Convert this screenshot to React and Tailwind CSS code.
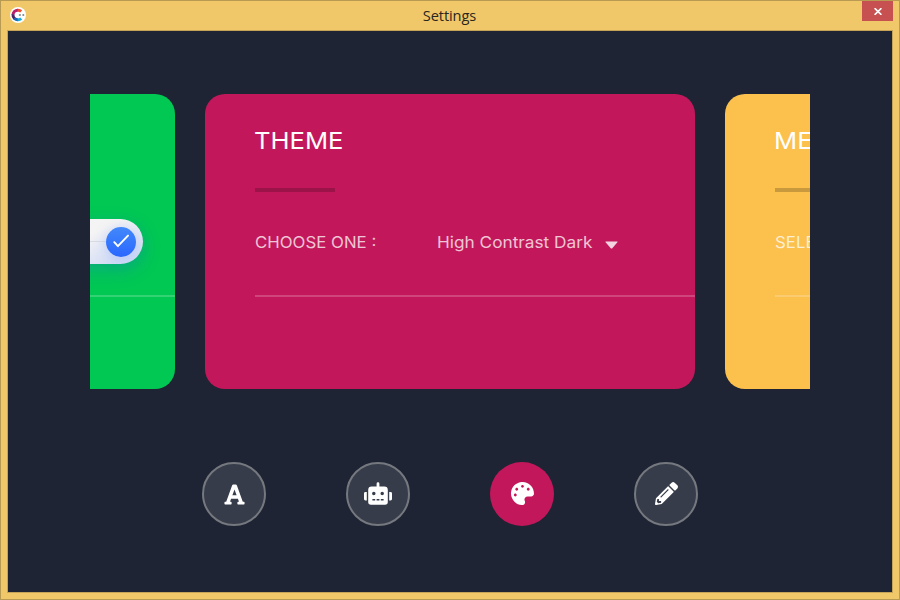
import { FaFont, FaRobot, FaPalette, FaPencilAlt } from "react-icons/fa";

function AppLogo() {
  return (
    <svg className="h-4 w-4" viewBox="0 0 16 16" fill="none">
      <circle cx="8" cy="8" r="8" fill="#fff" />
      <path d="M11.2 4.4A4.7 4.7 0 0 0 7.6 3.2" stroke="#ee4a32" strokeWidth="3" />
      <path d="M7.9 3.2A4.8 4.8 0 0 0 3 7.6" stroke="#b8206b" strokeWidth="3" />
      <path d="M3 7.2A5 5 0 0 0 4.6 11.6" stroke="#4b2466" strokeWidth="3" />
      <path d="M4.4 11.4A5 5 0 0 0 8 12.8" stroke="#1765b8" strokeWidth="3" />
      <path d="M7.7 12.8A4.7 4.7 0 0 0 11.2 11.5" stroke="#18a9d8" strokeWidth="3" />
      <path d="M8.8 8h2.2M9.9 7v2M12.2 8h2.2M13.3 7v2" stroke="#69717d" strokeWidth="0.8" />
    </svg>
  );
}

function TitleBar() {
  return (
    <header className="flex h-[29px] shrink-0 items-start justify-between">
      <div className="w-[39px] pl-[9px] pt-[6px]">
        <AppLogo />
      </div>
      <h1 className="pr-[3px] pt-[4px] font-['Open_Sans',sans-serif] text-[14.6px] leading-[21px] tracking-[-0.1px] text-[#29261f]">
        Settings
      </h1>
      <div className="w-[37px]">
        <button className="flex h-5 w-[31px] items-center justify-center bg-[#c75050]" aria-label="Close">
          <svg className="ml-px h-[7px] w-2" viewBox="0 0 8 7" stroke="#fff" strokeWidth="1.7">
            <path d="M0.6 0.2l6.8 6.6M7.4 0.2L0.6 6.8" />
          </svg>
        </button>
      </div>
    </header>
  );
}

function Toggle() {
  return (
    <div className="flex h-[45px] w-[100px] items-center justify-end rounded-full bg-linear-to-br from-[#f5f4f4] from-40% to-[#c9d6f6] pr-[7px] shadow-[0_6px_18px_rgba(40,90,255,0.25)]">
      <span className="h-px flex-1 bg-[#d9dce3]" />
      <span className="flex h-[30px] w-[30px] items-center justify-center rounded-full bg-linear-to-b from-[#4388fa] to-[#2b66ff] shadow-[0_2px_14px_rgba(60,110,255,0.25)]">
        <svg className="-mt-px h-4 w-4" viewBox="0 0 16 16" fill="none" stroke="#fff" strokeWidth="1.9" strokeLinecap="round" strokeLinejoin="round">
          <path d="M1.3 9.2l3.6 4L15 2.6" />
        </svg>
      </span>
    </div>
  );
}

function Card({ color, title, label, children }) {
  return (
    <section className={`flex h-[295px] w-[490px] shrink-0 flex-col rounded-[20px] pl-[50px] font-[Inter,sans-serif] ${color}`}>
      <h2 className="-ml-px mt-8 h-[30px] origin-left scale-x-[1.09] whitespace-nowrap text-[23.5px] leading-[30px] text-white">
        {title}
      </h2>
      <div className="mt-8 h-1 w-20 bg-black/20" />
      <div className="flex h-[105px] items-center border-b-2 border-white/20 pb-1 text-[16px] text-white/75">
        {label && (
          <span className="w-[182px] origin-left scale-x-[1.05] whitespace-nowrap">{label}</span>
        )}
        {children}
      </div>
    </section>
  );
}

function NavButton({ icon: Icon, active, size }) {
  return (
    <button
      className={`flex h-16 w-16 items-center justify-center rounded-full text-white ${
        active ? "bg-[#c2185b]" : "border-2 border-[#75797f] bg-[#363c49]"
      }`}
    >
      <Icon className={size} />
    </button>
  );
}

export default function App() {
  return (
    <div className="flex h-[600px] w-[900px] flex-col overflow-hidden border border-[#b89a53] bg-[#f0c869]">
      <TitleBar />
      <main className="mx-[6px] mb-[6px] flex flex-1 flex-col items-center border border-[#c6a457] bg-[#1e2433] pt-[63px]">
        <div className="flex w-[720px] justify-center gap-[30px] overflow-hidden">
          <Card color="bg-[#00c853]">
            <div className="flex flex-1 justify-end pr-8">
              <Toggle />
            </div>
          </Card>
          <Card color="bg-[#c2185b]" title="THEME" label="CHOOSE ONE :">
            <div className="flex items-center">
              <span className="w-[168px] origin-left scale-x-[1.077] whitespace-nowrap">High Contrast Dark</span>
              <svg className="mt-[7px] h-2 w-[13px]" viewBox="0 0 13 8" fill="#f3d3df">
                <path d="M1 0.5h11q1.1 0 .4.8L7.5 7q-1 1-2 0L.6 1.3Q-.1.5 1 .5z" />
              </svg>
            </div>
          </Card>
          <Card color="bg-[#fcc04d]" title="ME" label="SELECT" />
        </div>
        <nav className="mt-[73px] flex gap-20">
          <NavButton icon={FaFont} size="h-[23px] w-[23px]" />
          <NavButton icon={FaRobot} size="-mt-px h-[23px] w-[28px]" />
          <NavButton icon={FaPalette} size="-mt-px h-[23px] w-[23px]" active />
          <NavButton icon={FaPencilAlt} size="-mt-px h-[23px] w-[23px]" />
        </nav>
      </main>
    </div>
  );
}
